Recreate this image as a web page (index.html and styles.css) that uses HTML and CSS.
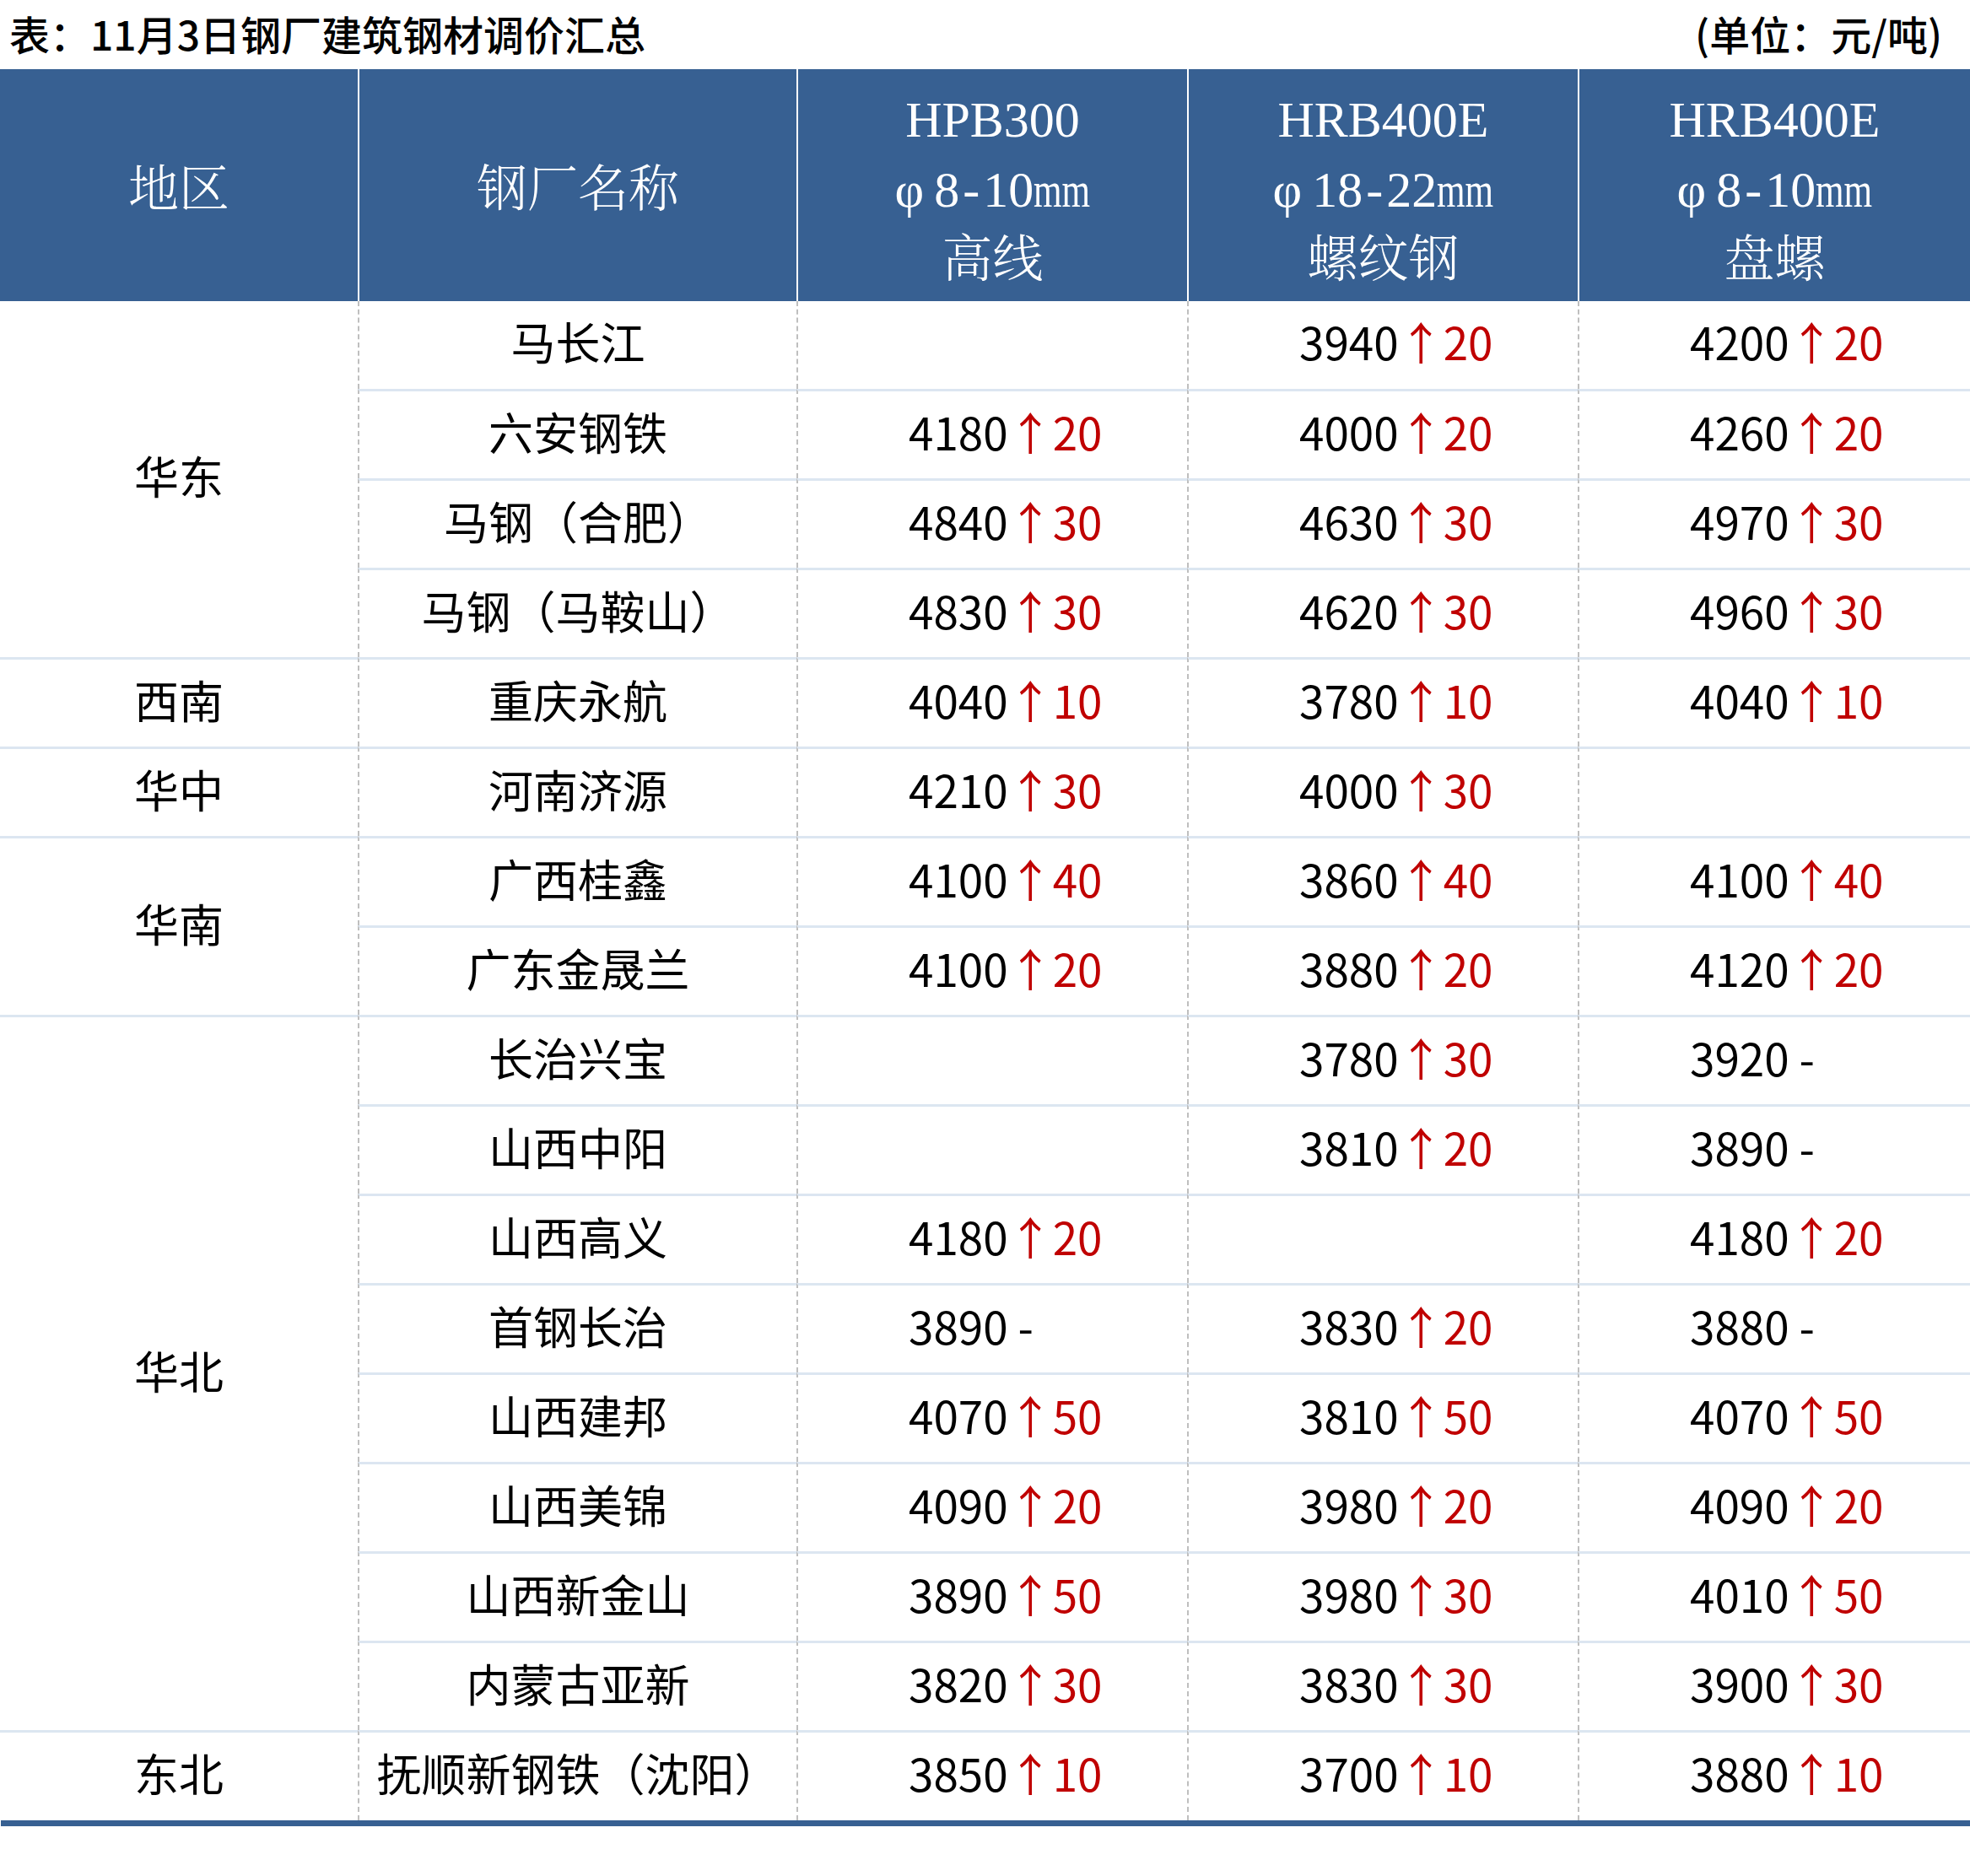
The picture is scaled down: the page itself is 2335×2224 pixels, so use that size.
FILE: index.html
```html
<!DOCTYPE html>
<html lang="zh-CN">
<head>
<meta charset="utf-8">
<title>11月3日钢厂建筑钢材调价汇总</title>
<link rel="stylesheet" href="styles.css">
</head>
<body>
<div class="page">
  <div class="titlebar">
    <div class="title">表：11月3日钢厂建筑钢材调价汇总</div>
    <div class="unit">(单位：元/吨)</div>
  </div>
  <div class="grid">
    <div class="hd c1">地区</div>
    <div class="hd">钢厂名称</div>
    <div class="hd"><span>HPB300</span><span><span class="phi">φ</span>8<span class="dash">-</span>10<span class="mm">mm</span></span><span class="cjk">高线</span></div>
    <div class="hd"><span>HRB400E</span><span><span class="phi">φ</span>18<span class="dash">-</span>22<span class="mm">mm</span></span><span class="cjk">螺纹钢</span></div>
    <div class="hd"><span>HRB400E</span><span><span class="phi">φ</span>8<span class="dash">-</span>10<span class="mm">mm</span></span><span class="cjk">盘螺</span></div>

    <div class="rg first span4">华东</div>
    <div class="nm first">马长江</div>
    <div class="v first"></div>
    <div class="v first">3940<i>↑</i><b>20</b></div>
    <div class="v first">4200<i>↑</i><b>20</b></div>

    <div class="nm">六安钢铁</div>
    <div class="v">4180<i>↑</i><b>20</b></div>
    <div class="v">4000<i>↑</i><b>20</b></div>
    <div class="v">4260<i>↑</i><b>20</b></div>

    <div class="nm">马钢（合肥）</div>
    <div class="v">4840<i>↑</i><b>30</b></div>
    <div class="v">4630<i>↑</i><b>30</b></div>
    <div class="v">4970<i>↑</i><b>30</b></div>

    <div class="nm">马钢（马鞍山）</div>
    <div class="v">4830<i>↑</i><b>30</b></div>
    <div class="v">4620<i>↑</i><b>30</b></div>
    <div class="v">4960<i>↑</i><b>30</b></div>

    <div class="rg">西南</div>
    <div class="nm">重庆永航</div>
    <div class="v">4040<i>↑</i><b>10</b></div>
    <div class="v">3780<i>↑</i><b>10</b></div>
    <div class="v">4040<i>↑</i><b>10</b></div>

    <div class="rg">华中</div>
    <div class="nm">河南济源</div>
    <div class="v">4210<i>↑</i><b>30</b></div>
    <div class="v">4000<i>↑</i><b>30</b></div>
    <div class="v"></div>

    <div class="rg span2">华南</div>
    <div class="nm">广西桂鑫</div>
    <div class="v">4100<i>↑</i><b>40</b></div>
    <div class="v">3860<i>↑</i><b>40</b></div>
    <div class="v">4100<i>↑</i><b>40</b></div>

    <div class="nm">广东金晟兰</div>
    <div class="v">4100<i>↑</i><b>20</b></div>
    <div class="v">3880<i>↑</i><b>20</b></div>
    <div class="v">4120<i>↑</i><b>20</b></div>

    <div class="rg span8">华北</div>
    <div class="nm">长治兴宝</div>
    <div class="v"></div>
    <div class="v">3780<i>↑</i><b>30</b></div>
    <div class="v">3920 -</div>

    <div class="nm">山西中阳</div>
    <div class="v"></div>
    <div class="v">3810<i>↑</i><b>20</b></div>
    <div class="v">3890 -</div>

    <div class="nm">山西高义</div>
    <div class="v">4180<i>↑</i><b>20</b></div>
    <div class="v"></div>
    <div class="v">4180<i>↑</i><b>20</b></div>

    <div class="nm">首钢长治</div>
    <div class="v">3890 -</div>
    <div class="v">3830<i>↑</i><b>20</b></div>
    <div class="v">3880 -</div>

    <div class="nm">山西建邦</div>
    <div class="v">4070<i>↑</i><b>50</b></div>
    <div class="v">3810<i>↑</i><b>50</b></div>
    <div class="v">4070<i>↑</i><b>50</b></div>

    <div class="nm">山西美锦</div>
    <div class="v">4090<i>↑</i><b>20</b></div>
    <div class="v">3980<i>↑</i><b>20</b></div>
    <div class="v">4090<i>↑</i><b>20</b></div>

    <div class="nm">山西新金山</div>
    <div class="v">3890<i>↑</i><b>50</b></div>
    <div class="v">3980<i>↑</i><b>30</b></div>
    <div class="v">4010<i>↑</i><b>50</b></div>

    <div class="nm">内蒙古亚新</div>
    <div class="v">3820<i>↑</i><b>30</b></div>
    <div class="v">3830<i>↑</i><b>30</b></div>
    <div class="v">3900<i>↑</i><b>30</b></div>

    <div class="rg">东北</div>
    <div class="nm">抚顺新钢铁（沈阳）</div>
    <div class="v">3850<i>↑</i><b>10</b></div>
    <div class="v">3700<i>↑</i><b>10</b></div>
    <div class="v">3880<i>↑</i><b>10</b></div>
  </div>
  <div class="bottombar"></div>
</div>
</body>
</html>
```

FILE: styles.css
```css
* { box-sizing: border-box; }
html, body { margin: 0; padding: 0; background: #ffffff; }
body {
  font-family: "Noto Sans CJK SC", "Noto Sans", sans-serif;
  color: #000000;
}
.page { width: 2335px; }

.titlebar {
  height: 82px;
  display: flex;
  justify-content: space-between;
  align-items: center;
  padding: 0 33px 4px 11px;
  font-size: 48px;
  font-weight: 500;
  line-height: 1;
}

.grid {
  display: grid;
  grid-template-columns: 424px 520px 463px 463px 465px;
  grid-template-rows: 275px 104px repeat(15, 106px) 107px;
}

.hd {
  background: #376092;
  color: #ffffff;
  display: flex;
  flex-direction: column;
  align-items: center;
  justify-content: center;
  font-family: "Liberation Serif", "Noto Serif CJK SC", "Noto Sans CJK SC", serif;
  font-size: 60px;
  line-height: 83px;
  font-weight: 300;
  border-left: 2px solid #ffffff;
  padding-top: 12px;
}
.hd.c1 { border-left: none; }
.hd > span { display: block; white-space: nowrap; }
.phi { margin-right: 12px; }
.dash { padding: 0 4px; }
.mm {
  display: inline-block;
  transform: scaleX(0.72);
  transform-origin: left center;
  margin-right: -26px;
}

.rg, .nm, .v {
  border-top: 3px solid #dce6f1;
  font-size: 53px;
  line-height: 1;
  display: flex;
  align-items: center;
  white-space: nowrap;
  padding-bottom: 9px;
}
.first { border-top: none; }
.rg { justify-content: center; }
.nm, .v { border-left: 2px dashed #bfbfbf; }
.nm { justify-content: center; }
.v { padding-left: 131px; }

.span2 { grid-row: span 2; }
.span4 { grid-row: span 4; }
.span8 { grid-row: span 8; }

.v i { font-style: normal; color: #c00000; }
.v b { font-weight: 400; color: #c00000; }

.bottombar {
  height: 7px;
  background: #376092;
  margin-left: 1px;
}
```
